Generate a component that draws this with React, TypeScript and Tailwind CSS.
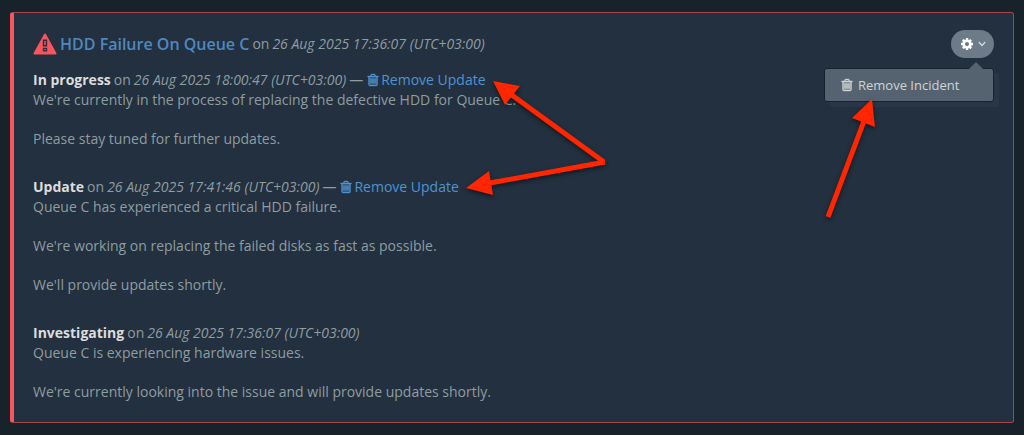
type Update = {
  status: string;
  date: string;
  removable: boolean;
  lines: string[];
};

const updates: Update[] = [
  {
    status: "In progress",
    date: "26 Aug 2025 18:00:47 (UTC+03:00)",
    removable: true,
    lines: [
      "We're currently in the process of replacing the defective HDD for Queue C.",
      "Please stay tuned for further updates.",
    ],
  },
  {
    status: "Update",
    date: "26 Aug 2025 17:41:46 (UTC+03:00)",
    removable: true,
    lines: [
      "Queue C has experienced a critical HDD failure.",
      "We're working on replacing the failed disks as fast as possible.",
      "We'll provide updates shortly.",
    ],
  },
  {
    status: "Investigating",
    date: "26 Aug 2025 17:36:07 (UTC+03:00)",
    removable: false,
    lines: [
      "Queue C is experiencing hardware issues.",
      "We're currently looking into the issue and will provide updates shortly.",
    ],
  },
];

function TrashIcon() {
  return (
    <svg viewBox="0 0 1792 1792" fill="currentColor" aria-hidden="true" className="size-3.5">
      <path d="M448 512h896v1024h-896z" opacity=".3" />
      <path
        stroke="currentColor"
        strokeWidth="50"
        d="M704 736v576q0 14-9 23t-23 9h-64q-14 0-23-9t-9-23v-576q0-14 9-23t23-9h64q14 0 23 9t9 23zm256 0v576q0 14-9 23t-23 9h-64q-14 0-23-9t-9-23v-576q0-14 9-23t23-9h64q14 0 23 9t9 23zm256 0v576q0 14-9 23t-23 9h-64q-14 0-23-9t-9-23v-576q0-14 9-23t23-9h64q14 0 23 9t9 23zm128 724v-948h-896v948q0 22 7 40.5t14.5 27 10.5 8.5h832q3 0 10.5-8.5t14.5-27 7-40.5zm-672-1076h448l-48-117q-7-9-17-11h-317q-10 2-17 11zm928 32v64q0 14-9 23t-23 9h-96v948q0 83-47 143.5t-113 60.5h-832q-66 0-113-58.5t-47-141.5v-952h-96q-14 0-23-9t-9-23v-64q0-14 9-23t23-9h309l70-167q15-37 54-63t79-26h320q40 0 79 26t54 63l70 167h309q14 0 23 9t9 23z"
      />
    </svg>
  );
}

function CogIcon() {
  return (
    <svg viewBox="0 0 1792 1792" fill="currentColor" aria-hidden="true" className="size-3.5">
      <path d="M1152 896q0-106-75-181t-181-75-181 75-75 181 75 181 181 75 181-75 75-181zm512-109v222q0 12-8 23t-20 13l-185 28q-19 54-39 91 35 50 107 138 10 12 10 25t-9 23q-27 37-99 108t-94 71q-12 0-26-9l-138-108q-44 23-91 38-16 136-29 186-7 28-36 28h-222q-14 0-24.5-8.5t-11.5-21.5l-28-184q-49-16-90-37l-141 107q-10 9-25 9-14 0-25-11-126-114-165-168-7-10-7-23 0-12 8-23 15-21 51-66.5t54-70.5q-27-50-41-99l-183-27q-13-2-21-12.5t-8-23.5v-222q0-12 8-23t19-13l186-28q14-46 39-92-40-57-107-138-10-12-10-24 0-10 9-23 26-36 98.5-107.5t94.5-71.5q13 0 26 10l138 107q44-23 91-38 16-136 29-186 7-28 36-28h222q14 0 24.5 8.5t11.5 21.5l28 184q49 16 90 37l142-107q9-9 24-9 13 0 25 10 129 119 165 170 7 8 7 22 0 12-8 23-15 21-51 66.5t-54 70.5q26 50 41 98l183 28q13 2 21 12.5t8 23.5z" />
    </svg>
  );
}

function WarningIcon() {
  return (
    <svg viewBox="0 0 24 22" aria-hidden="true" className="h-[22px] w-6 shrink-0">
      <path d="M12 1.5 22.5 20.5H1.5Z" fill="#f9555f" stroke="#f9555f" strokeWidth="2" strokeLinejoin="round" />
      <path d="M9.8 6.5h4.4v7H9.8zM9.8 14.8h4.4v3.6H9.8z" fill="#2a303d" />
      <path d="M11.3 8h1.4v4h-1.4zM11.3 16h1.4v1.2h-1.4z" fill="#f9555f" />
    </svg>
  );
}

function IncidentMenu() {
  return (
    <div className="relative">
      <button
        type="button"
        aria-label="Incident options"
        aria-expanded="true"
        className="flex h-7 w-[43px] items-center justify-center gap-1 rounded-full bg-[#6d7a87] text-white"
      >
        <CogIcon />
        <svg viewBox="0 0 8 6" fill="none" stroke="#d5dade" aria-hidden="true" className="h-1.5 w-2">
          <path d="M.8 1 4 4.5 7.2 1" strokeWidth="1.2" />
        </svg>
      </button>
      <div className="absolute top-[38px] right-0 w-[170px] rounded-[3px] border border-[#17222c] bg-[#556370] shadow-[5px_5px_0_rgba(255,255,255,0.03)]">
        <svg viewBox="0 0 14 7" aria-hidden="true" className="absolute -top-[7px] right-2.5 h-[7px] w-3.5">
          <path d="M0 7 7 0l7 7z" fill="#556370" />
        </svg>
        <button type="button" className="flex h-8 w-full items-center gap-1 px-[15px] text-[13px] text-[#cfd3d5]">
          <TrashIcon />
          Remove Incident
        </button>
      </div>
    </div>
  );
}

function UpdateEntry({ update }: { update: Update }) {
  return (
    <section className="leading-5">
      <div className="flex items-center gap-[3px]">
        <h3 className="font-bold text-[#dcdcdc]">{update.status}</h3>
        <span>on</span>
        <em>{update.date}</em>
        {update.removable && (
          <>
            <span>—</span>
            <a href="#remove-update" className="flex items-center gap-px text-[#5193d0]">
              <TrashIcon />
              Remove Update
            </a>
          </>
        )}
      </div>
      <div className="flex flex-col gap-[19px]">
        {update.lines.map((line) => (
          <p key={line}>{line}</p>
        ))}
      </div>
    </section>
  );
}

function Arrows() {
  return (
    <svg
      viewBox="0 0 1024 435"
      aria-hidden="true"
      className="pointer-events-none absolute top-0 left-0 h-[435px] w-[1024px] drop-shadow-[0_2px_2px_rgba(0,0,0,0.5)]"
    >
      <g stroke="#ff2600" strokeWidth="5" fill="none">
        <path d="M509 93 604 162" />
        <path d="M605 162 490 183" />
        <path d="M828 217 864 121" />
      </g>
      <g fill="#ff2600">
        <path d="M493 81 520 86 505 105Z" />
        <path d="M466 188 489 171 493 195Z" />
        <path d="M872 99 852 118 875 127Z" />
      </g>
    </svg>
  );
}

export default function App() {
  return (
    <main className="relative min-h-screen bg-[#18222b] px-2.5 py-3 font-['Open_Sans',sans-serif] text-sm text-[#8f9da0]">
      <article className="rounded-[3px] border border-l-4 border-[#a7454f] border-l-[#f9555f] bg-[#22303f] pt-[17px] pr-[19px] pb-5 pl-[19px]">
        <header className="flex items-start justify-between">
          <div className="flex h-7 items-center gap-[3px]">
            <WarningIcon />
            <h2 className="text-base font-semibold text-[#4f88c0]">
              <a href="#incident">HDD Failure On Queue C</a>
            </h2>
            <span>on</span>
            <em>26 Aug 2025 17:36:07 (UTC+03:00)</em>
          </div>
          <IncidentMenu />
        </header>
        <div className="mt-3 flex flex-col gap-7">
          {updates.map((update) => (
            <UpdateEntry key={update.date} update={update} />
          ))}
        </div>
      </article>
      <Arrows />
    </main>
  );
}
